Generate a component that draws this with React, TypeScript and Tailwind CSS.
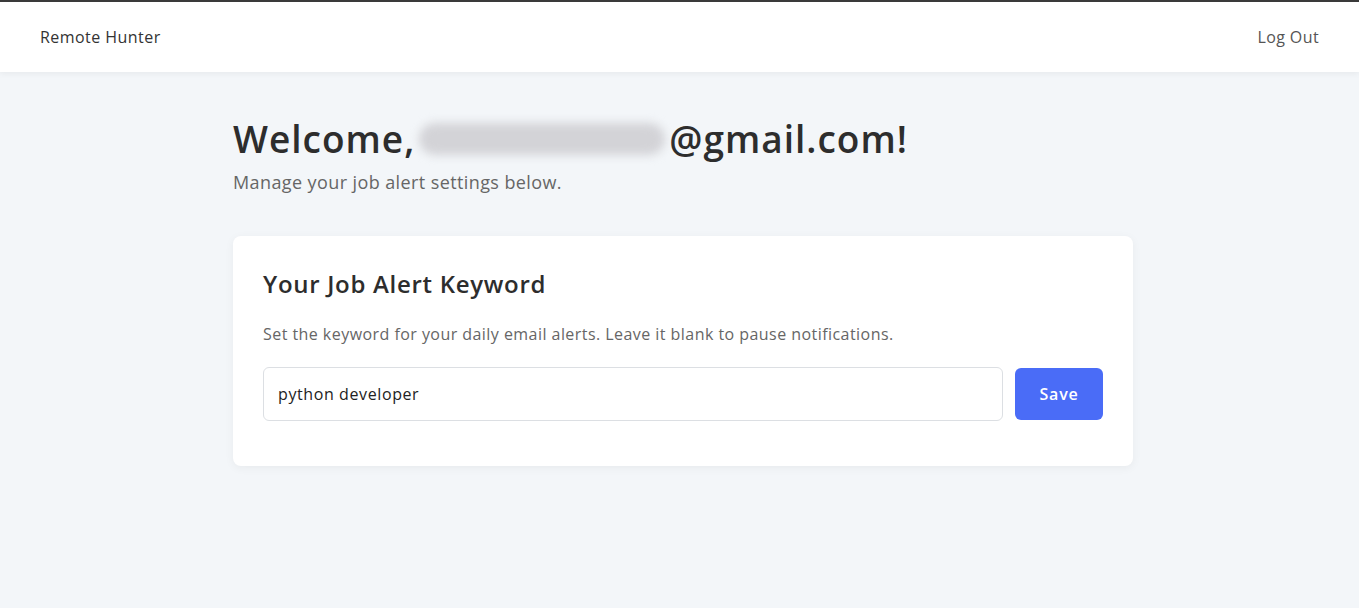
import { useState } from "react";

const font = { fontFamily: '"Open Sans", "Noto Sans", sans-serif' };

function Header() {
  return (
    <header className="flex h-[72px] items-center justify-between border-t-2 border-[#3a3a3a] bg-white px-10 shadow-[0_2px_6px_rgba(0,0,0,0.05)]">
      <span className="text-[16px] tracking-[0.45px] text-[#333]">Remote Hunter</span>
      <button className="text-[16px] tracking-[0.4px] text-[#555]">Log Out</button>
    </header>
  );
}

export default function App() {
  const [keyword, setKeyword] = useState("python developer");

  return (
    <div className="min-h-[608px] bg-[#f3f6f9]" style={font}>
      <Header />

      <main className="mx-auto w-[907px] pl-[7px] pt-[41px]">
        <h1 className="flex items-center text-[37px] font-semibold leading-[52px] tracking-[1px] text-[#2d2d2d]">
          Welcome,
          <span className="relative inline-block h-[48px] w-[254px]">
            <span className="absolute inset-x-1 inset-y-2 rounded-[20px] bg-[#d3d3d7] blur-[5px]" />
          </span>
          @gmail.com!
        </h1>
        <p className="mt-[4px] text-[18px] tracking-[0.4px] text-[#666]">Manage your job alert settings below.</p>

        <section className="mt-[40px] rounded-lg bg-white px-[30px] pt-[30px] pb-[45px] shadow-[0_2px_10px_rgba(0,0,0,0.05)]">
          <h2 className="text-[24px] font-semibold tracking-[0.7px] text-[#2d2d2d]">Your Job Alert Keyword</h2>
          <p className="mt-[20px] text-[16px] tracking-[0.45px] text-[#666]">
            Set the keyword for your daily email alerts. Leave it blank to pause notifications.
          </p>

          <div className="mt-[21px] flex items-center gap-3">
            <input
              value={keyword}
              onChange={(e) => setKeyword(e.target.value)}
              className="h-[54px] flex-1 rounded-md border border-[#dcdfe3] px-[14px] text-[16px] tracking-[0.6px] text-[#222] outline-none"
              style={font}
            />
            <button className="h-[52px] w-[88px] rounded-md bg-[#4a6cf7] text-[16px] font-semibold tracking-[0.8px] text-white">
              Save
            </button>
          </div>
        </section>
      </main>
    </div>
  );
}
